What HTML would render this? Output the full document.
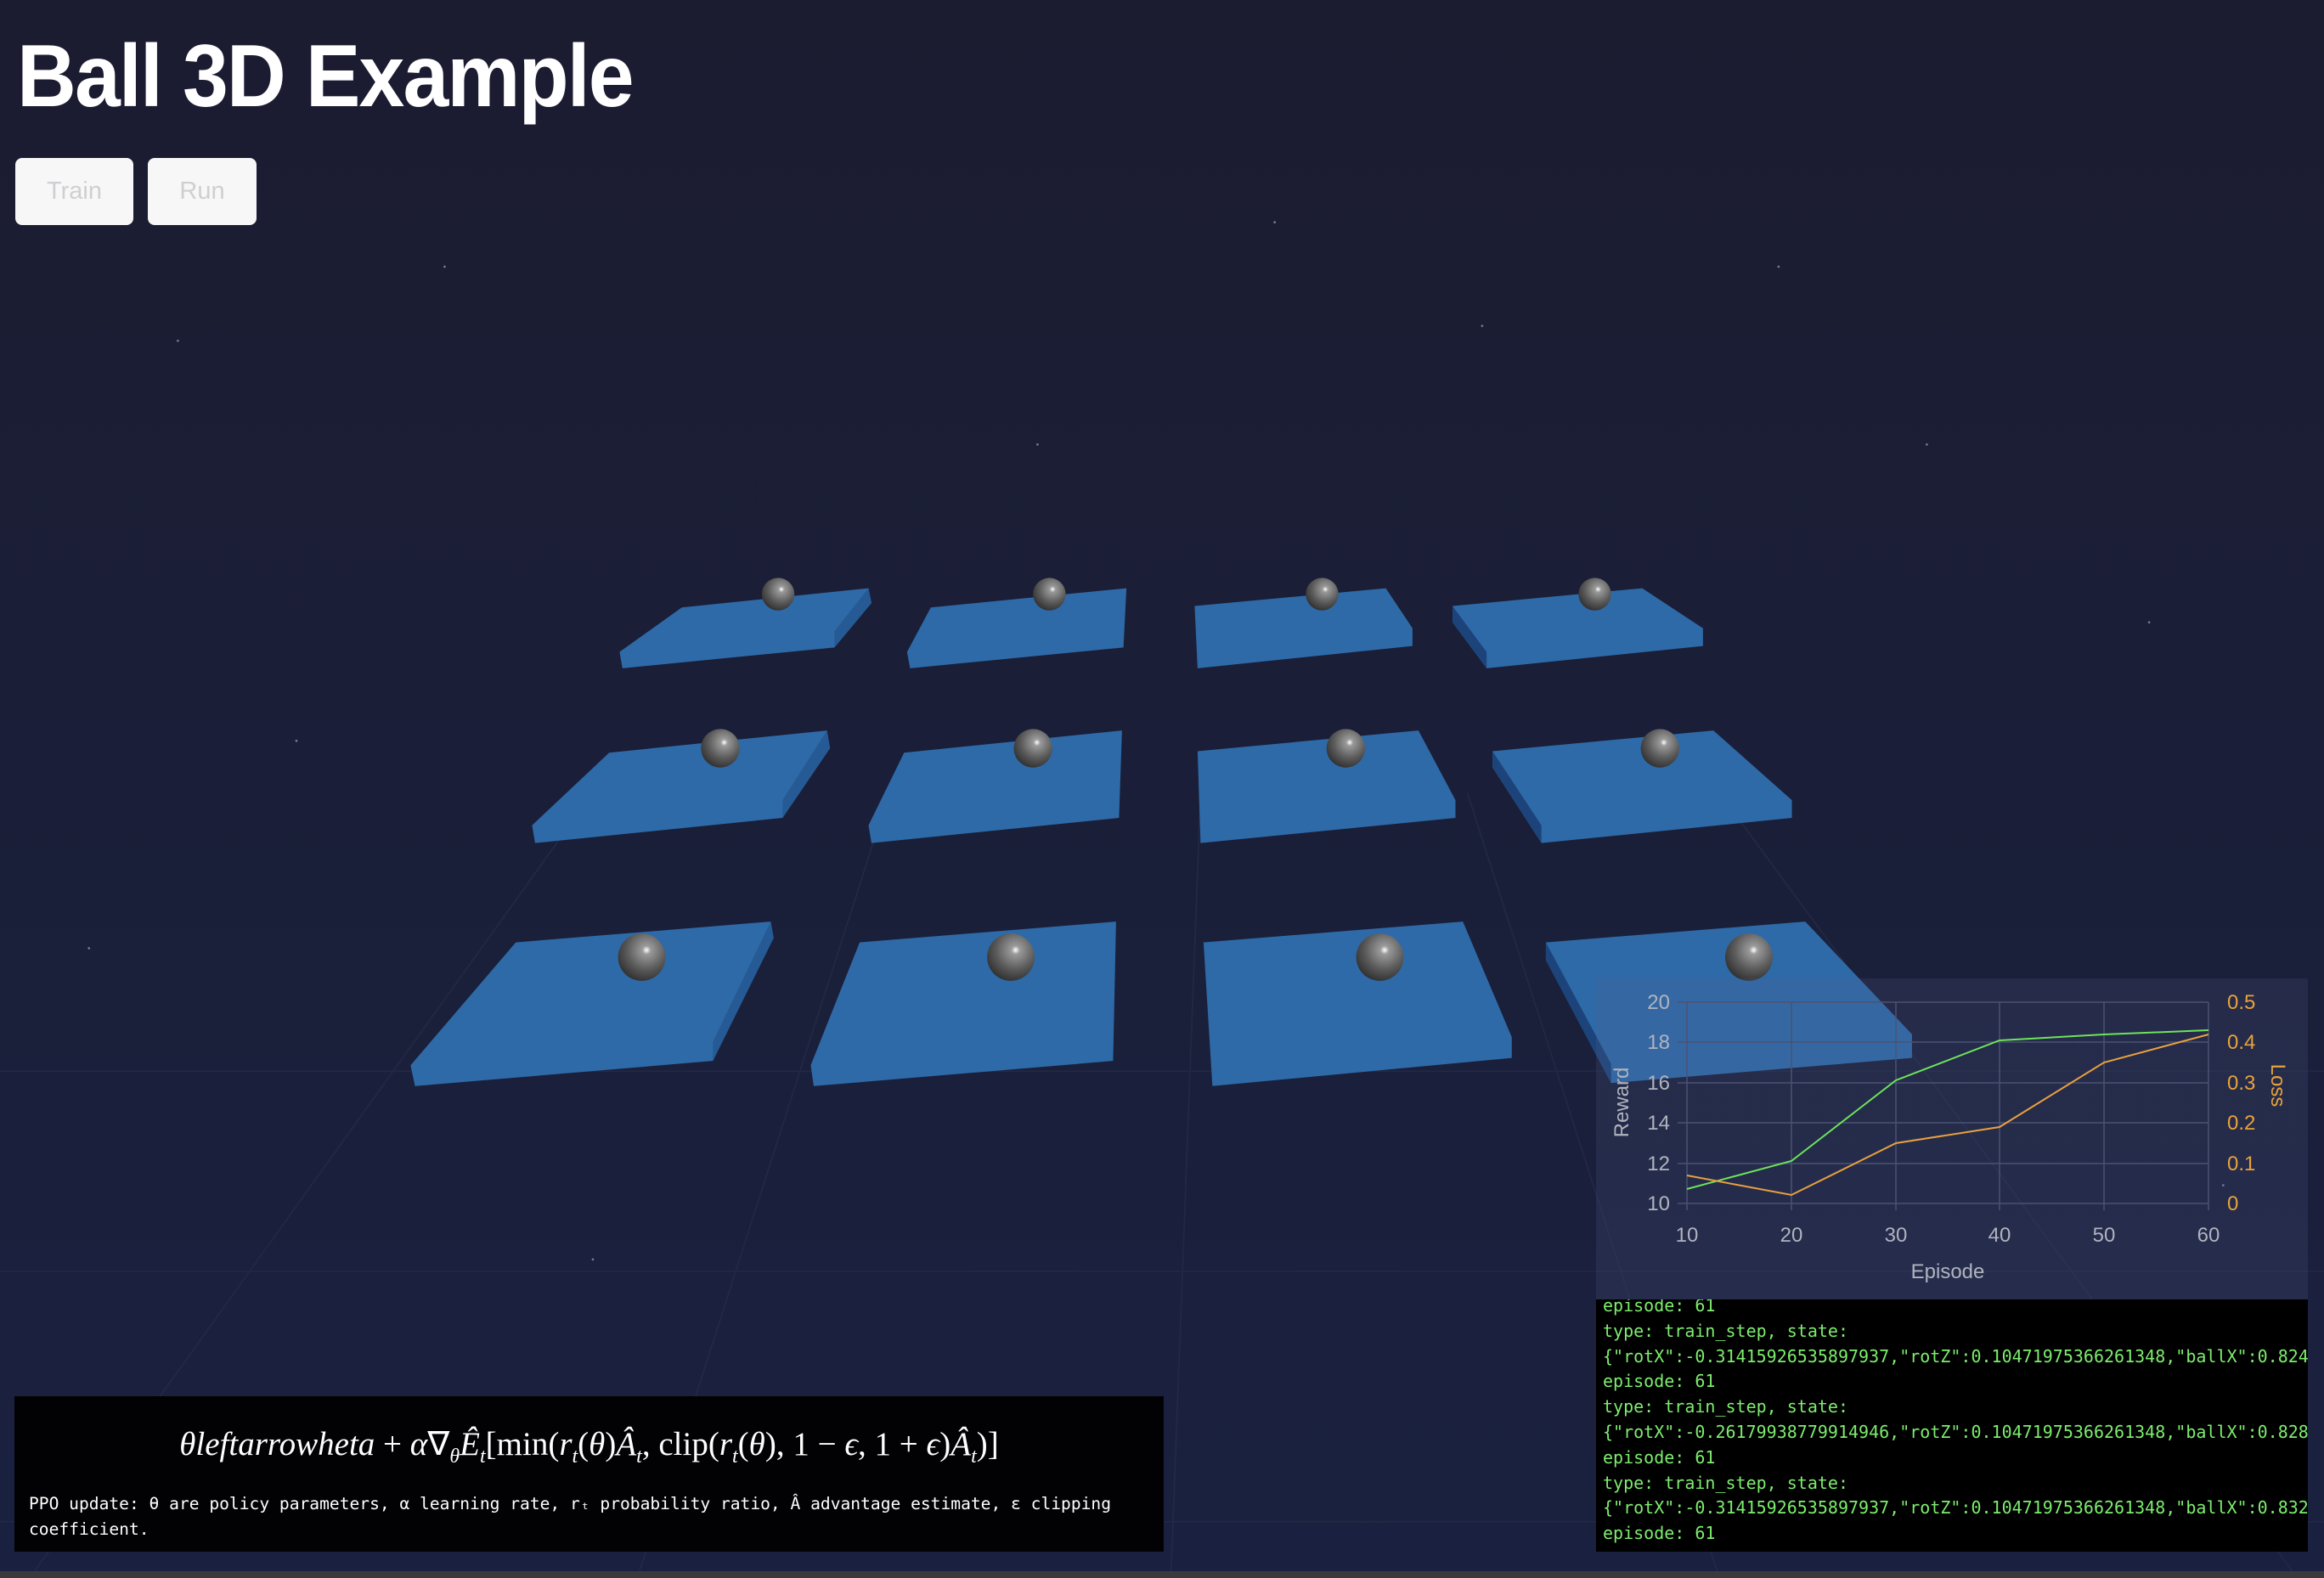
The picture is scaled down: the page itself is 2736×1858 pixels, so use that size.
<!DOCTYPE html>
<html><head><meta charset="utf-8"><style>
html,body{margin:0;padding:0;}
body{width:2736px;height:1858px;overflow:hidden;position:relative;background:#1b1c31;font-family:"Liberation Sans",sans-serif;}
#bg{position:absolute;left:0;top:0;}
h1{position:absolute;left:20px;top:31px;margin:0;font-size:104px;font-weight:bold;color:#fff;letter-spacing:-2px;transform:scaleX(0.93);transform-origin:left top;white-space:nowrap;line-height:1.15;}
.btn{position:absolute;top:186px;height:79px;background:#f7f7f8;border-radius:8px;color:#cfcfd2;font-size:29px;display:flex;align-items:center;justify-content:center;}
#chart{position:absolute;left:1879px;top:1152px;width:838px;height:378px;background:rgba(90,100,145,0.18);}
#log{position:absolute;left:1879px;top:1530px;width:838px;height:297px;background:#000;overflow:hidden;font-family:"DejaVu Sans Mono","Liberation Mono",monospace;font-size:20px;color:#7ded6e;white-space:pre;line-height:29.8px;}
#log div{position:relative;top:-7px;left:8px;}
#eq{position:absolute;left:17px;top:1644px;width:1353px;height:183px;background:#020204;color:#fff;}
#eq .f{position:absolute;top:34px;left:0;width:100%;text-align:center;font-family:"Liberation Serif",serif;font-size:39px;}
#eq .c{position:absolute;left:17px;top:112px;width:1340px;font-family:"DejaVu Sans Mono","Liberation Mono",monospace;font-size:19.6px;line-height:30px;white-space:nowrap;}
#bar{position:absolute;left:0;top:1850px;width:2736px;height:8px;background:#3a3a3e;}
</style></head><body>
<svg id="bg" width="2736" height="1858" viewBox="0 0 1568 1065" preserveAspectRatio="none">
<defs>
<radialGradient id="ball" cx="0.6" cy="0.35" r="0.75"><stop offset="0" stop-color="#fff"/><stop offset="0.12" stop-color="#9a9a9a"/><stop offset="0.55" stop-color="#5a5a5a"/><stop offset="1" stop-color="#262626"/></radialGradient>
<linearGradient id="sky" x1="0" y1="0" x2="0" y2="1"><stop offset="0" stop-color="#1b1c30"/><stop offset="1" stop-color="#1a2140"/></linearGradient>
</defs>
<rect width="1568" height="1065" fill="url(#sky)"/>
<g stroke="#262c48" stroke-width="1" fill="none" opacity="0.7">
<line x1="0" y1="723" x2="1568" y2="723"/><line x1="0" y1="858" x2="1568" y2="858"/><line x1="0" y1="1027" x2="1568" y2="1027"/>
<line x1="400" y1="535" x2="20" y2="1065"/><line x1="600" y1="535" x2="430" y2="1065"/><line x1="810" y1="535" x2="790" y2="1065"/><line x1="990" y1="535" x2="1160" y2="1065"/><line x1="1160" y1="535" x2="1550" y2="1065"/>
</g>
<g fill="#2e6aa8">
<polygon points="460,410 586,397 588,407 563,437 563,437 420,451 418,440"/>
<polygon points="628,410 760,397 758,437 614,451 612,440"/>
<polygon points="806,409 935,397 953,424 953,436 808,451"/>
<polygon points="980,409 1108,397 1149,424 1149,436 1003,451 980,420"/>
<polygon points="411,508 558,493 560,505 528,552 361,569 359,557"/>
<polygon points="610,508 757,493 755,552 588,569 586,557"/>
<polygon points="808,507 957,493 982,540 982,552 810,569"/>
<polygon points="1007,507 1156,493 1209,540 1209,552 1040,569 1007,518"/>
<polygon points="348,636 520,622 522,633 481,716 280,733 277,719"/>
<polygon points="580,636 753,622 751,716 549,733 547,719"/>
<polygon points="812,636 987,622 1020,700 1020,714 818,733"/>
<polygon points="1043,636 1218,622 1290,698 1290,714 1087,731 1043,648"/>
</g>
<g fill="#255a95">
<polygon points="586,397 588,407 563,437 563,426"/>
<polygon points="558,493 560,505 528,552 528,540"/>
<polygon points="520,622 522,633 481,716 481,703"/>
</g>
<g fill="#1d447a">
<polygon points="980,409 1003,440 1003,451 980,420"/>
<polygon points="1007,507 1040,557 1040,569 1007,518"/>
<polygon points="1043,636 1087,718 1087,731 1043,648"/>
</g>
<g fill="url(#ball)">
<circle cx="525" cy="401" r="11"/><circle cx="708" cy="401" r="11"/><circle cx="892" cy="401" r="11"/><circle cx="1076" cy="401" r="11"/>
<circle cx="486" cy="505" r="13"/><circle cx="697" cy="505" r="13"/><circle cx="908" cy="505" r="13"/><circle cx="1120" cy="505" r="13"/>
<circle cx="433" cy="646" r="16"/><circle cx="682" cy="646" r="16"/><circle cx="931" cy="646" r="16"/><circle cx="1180" cy="646" r="16"/>
</g>
<g fill="#cfd3e0" opacity="0.5">
<circle cx="120" cy="230" r="0.8"/><circle cx="300" cy="180" r="0.8"/><circle cx="860" cy="150" r="0.8"/><circle cx="1300" cy="300" r="0.8"/><circle cx="200" cy="500" r="0.8"/><circle cx="1450" cy="420" r="0.8"/><circle cx="700" cy="300" r="0.8"/><circle cx="1000" cy="220" r="0.8"/><circle cx="60" cy="640" r="0.8"/><circle cx="1500" cy="800" r="0.8"/><circle cx="400" cy="850" r="0.8"/><circle cx="1200" cy="180" r="0.8"/>
</g>
</svg>
<h1>Ball 3D Example</h1>
<div class="btn" style="left:18px;width:139px;">Train</div>
<div class="btn" style="left:174px;width:128px;">Run</div>

<div id="chart"></div>
<svg style="position:absolute;left:0;top:0" width="2736" height="1858">
<g stroke="#4a5272" stroke-width="1.5">
<line x1="1986" y1="1180" x2="2600" y2="1180"/><line x1="1986" y1="1227" x2="2600" y2="1227"/><line x1="1986" y1="1275" x2="2600" y2="1275"/><line x1="1986" y1="1322" x2="2600" y2="1322"/><line x1="1986" y1="1370" x2="2600" y2="1370"/><line x1="1986" y1="1417" x2="2600" y2="1417"/>
<line x1="1986" y1="1180" x2="1986" y2="1425"/><line x1="2109" y1="1180" x2="2109" y2="1425"/><line x1="2232" y1="1180" x2="2232" y2="1425"/><line x1="2354" y1="1180" x2="2354" y2="1425"/><line x1="2477" y1="1180" x2="2477" y2="1425"/><line x1="2600" y1="1180" x2="2600" y2="1425"/>
<line x1="1975" y1="1180" x2="1986" y2="1180"/><line x1="1975" y1="1227" x2="1986" y2="1227"/><line x1="1975" y1="1275" x2="1986" y2="1275"/><line x1="1975" y1="1322" x2="1986" y2="1322"/><line x1="1975" y1="1370" x2="1986" y2="1370"/><line x1="1975" y1="1417" x2="1986" y2="1417"/>
</g>
<polyline fill="none" stroke="#6ee35a" stroke-width="2" points="1986,1400 2109,1367 2232,1272 2354,1225 2477,1218 2600,1213"/>
<polyline fill="none" stroke="#e9a040" stroke-width="2" points="1986,1384 2109,1407 2232,1346 2354,1327 2477,1251 2600,1218"/>
<g font-family="Liberation Sans, sans-serif" font-size="24" fill="#b0b3be" text-anchor="end">
<text x="1966" y="1188">20</text><text x="1966" y="1235">18</text><text x="1966" y="1283">16</text><text x="1966" y="1330">14</text><text x="1966" y="1378">12</text><text x="1966" y="1425">10</text>
</g>
<g font-family="Liberation Sans, sans-serif" font-size="24" fill="#e9a23b">
<text x="2622" y="1188">0.5</text><text x="2622" y="1235">0.4</text><text x="2622" y="1283">0.3</text><text x="2622" y="1330">0.2</text><text x="2622" y="1378">0.1</text><text x="2622" y="1425">0</text>
<text transform="translate(2674,1278) rotate(90)" text-anchor="middle">Loss</text>
</g>
<g font-family="Liberation Sans, sans-serif" font-size="24" fill="#b0b3be" text-anchor="middle">
<text x="1986" y="1462">10</text><text x="2109" y="1462">20</text><text x="2232" y="1462">30</text><text x="2354" y="1462">40</text><text x="2477" y="1462">50</text><text x="2600" y="1462">60</text>
<text x="2293" y="1505">Episode</text>
<text transform="translate(1917,1298) rotate(-90)">Reward</text>
</g>
</svg>

<div id="log"><div>episode: 61
type: train_step, state:
{"rotX":-0.31415926535897937,"rotZ":0.10471975366261348,"ballX":0.824
episode: 61
type: train_step, state:
{"rotX":-0.26179938779914946,"rotZ":0.10471975366261348,"ballX":0.828
episode: 61
type: train_step, state:
{"rotX":-0.31415926535897937,"rotZ":0.10471975366261348,"ballX":0.832
episode: 61</div></div>

<div id="eq">
<div class="f"><i>θleftarrowheta</i> + <i>α</i>∇<sub style="font-size:24px"><i>θ</i></sub><i>Ê</i><sub style="font-size:24px"><i>t</i></sub>[min(<i>r</i><sub style="font-size:24px"><i>t</i></sub>(<i>θ</i>)<i>Â</i><sub style="font-size:24px"><i>t</i></sub>, clip(<i>r</i><sub style="font-size:24px"><i>t</i></sub>(<i>θ</i>), 1 − <i>ϵ</i>, 1 + <i>ϵ</i>)<i>Â</i><sub style="font-size:24px"><i>t</i></sub>)]</div>
<div class="c">PPO update: θ are policy parameters, α learning rate, rₜ probability ratio, Â advantage estimate, ε clipping<br>coefficient.</div>
</div>
<div id="bar"></div>
</body></html>
